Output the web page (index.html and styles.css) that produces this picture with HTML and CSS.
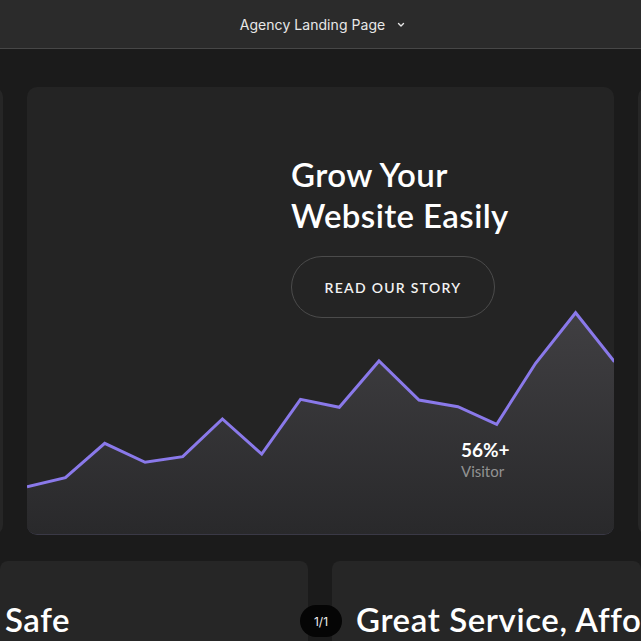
FILE: index.html
```html
<!DOCTYPE html>
<html>
<head>
<meta charset="utf-8">
<link rel="stylesheet" href="styles.css">
</head>
<body>
<header class="topbar">
  <span class="topbar-title">Agency Landing Page</span>
  <svg class="chevron" width="8" height="6" viewBox="0 0 8 6"><path d="M1.5 1.5 4 4 6.5 1.5" fill="none" stroke="#e6e6e6" stroke-width="1.4" stroke-linecap="round" stroke-linejoin="round"/></svg>
</header>

<main class="stage">
  <section class="slider">
    <div class="side-card"></div>
    <div class="hero-card">
      <svg class="chart" viewBox="0 0 587 447" preserveAspectRatio="none">
        <defs>
          <linearGradient id="area" x1="0" y1="0" x2="0" y2="1">
            <stop offset="0" stop-color="#403f42"/>
            <stop offset="1" stop-color="#29292b"/>
          </linearGradient>
        </defs>
        <path d="M0 399.7 L38.4 390.7 L77.7 356.3 L118.1 375.3 L155.7 369.7 L195.4 332 L234.7 367 L273.5 312.3 L312.3 320.3 L352 274 L392 313 L430.9 319.7 L469.7 337.3 L508.6 276.3 L548.6 225.7 L587.5 274.7 L587.5 447 L0 447 Z" fill="url(#area)"/>
        <polyline points="0,399.7 38.4,390.7 77.7,356.3 118.1,375.3 155.7,369.7 195.4,332 234.7,367 273.5,312.3 312.3,320.3 352,274 392,313 430.9,319.7 469.7,337.3 508.6,276.3 548.6,225.7 587.5,274.7" fill="none" stroke="#8a79ea" stroke-width="3" stroke-linejoin="miter"/>
      </svg>
      <div class="hero-text">
        <h1 class="hero-title">Grow Your<br>Website Easily</h1>
        <a class="story-btn">READ OUR STORY</a>
      </div>
      <div class="stat">
        <div class="stat-value">56%+</div>
        <div class="stat-label">Visitor</div>
      </div>
    </div>
    <div class="side-card"></div>
  </section>

  <section class="features">
    <div class="feature-card feature-left"><h2 class="feature-title">Safe</h2></div>
    <div class="feature-card"><h2 class="feature-title">Great Service, Affordable Price</h2></div>
    <span class="pager">1/1</span>
  </section>
</main>
</body>
</html>
```

FILE: styles.css
```css
* { box-sizing: border-box; }
html, body { margin: 0; padding: 0; }
body {
  background: #1b1b1b;
  font-family: "Lato", "Noto Sans", sans-serif;
  color: #fff;
  width: 641px;
  height: 641px;
  overflow: hidden;
}
.topbar {
  height: 49px;
  background: #2b2b2b;
  border-bottom: 1px solid #474747;
  display: flex;
  align-items: center;
  justify-content: center;
  gap: 12px;
  padding-left: 4px;
}
.topbar-title {
  font-family: "Inter", "Roboto", sans-serif;
  font-size: 14px;
  color: #e8e8e8;
  letter-spacing: 0.05px;
}
.chevron { margin-top: 1px; }

.stage { overflow: hidden; }
.slider {
  margin-top: 38px;
  height: 448px;
  display: flex;
  justify-content: center;
  gap: 24px;
}
.side-card {
  flex: 0 0 587px;
  background: #262626;
  border-radius: 10px;
}
.hero-card {
  flex: 0 0 587px;
  position: relative;
  background: #242424;
  border-radius: 10px;
  overflow: hidden;
  border-bottom: 1px solid #3a3946;
}
.chart {
  position: absolute;
  inset: 0;
  width: 100%;
  height: 100%;
  display: block;
}
.hero-text {
  position: relative;
  padding: 67px 0 0 264px;
}
.hero-title {
  margin: 0;
  font-size: 33px;
  line-height: 41px;
  font-weight: 600;
  letter-spacing: 0.4px;
  color: #fff;
}
.story-btn {
  margin-top: 20px;
  display: flex;
  align-items: center;
  justify-content: center;
  width: 204px;
  height: 62px;
  border: 1px solid #4b4b4b;
  border-radius: 31px;
  font-size: 14px;
  font-weight: 600;
  letter-spacing: 1.3px;
  color: #f2f2f2;
}
.stat {
  position: absolute;
  left: 434px;
  top: 351px;
}
.stat-value {
  font-size: 19px;
  font-weight: 700;
  line-height: 24px;
  color: #fff;
}
.stat-label {
  font-size: 15px;
  line-height: 19px;
  color: #929292;
}

.features {
  position: relative;
  margin-top: 26px;
  height: 90px;
  display: grid;
  grid-template-columns: 308px 1fr;
  gap: 24px;
}
.feature-card {
  background: #262626;
  border-radius: 8px 8px 0 0;
  padding: 38px 0 0 24px;
  overflow: hidden;
  white-space: nowrap;
}
.feature-left { padding-left: 5px; }
.feature-title {
  margin: 0;
  font-size: 33px;
  line-height: 40px;
  font-weight: 600;
  letter-spacing: 0.6px;
  color: #fff;
}
.pager {
  position: absolute;
  left: 300px;
  top: 44px;
  width: 42px;
  height: 32px;
  border-radius: 16px;
  background: #050505;
  display: flex;
  align-items: center;
  justify-content: center;
  font-family: "Inter", sans-serif;
  font-size: 12px;
  color: #f0f0f0;
}
```
